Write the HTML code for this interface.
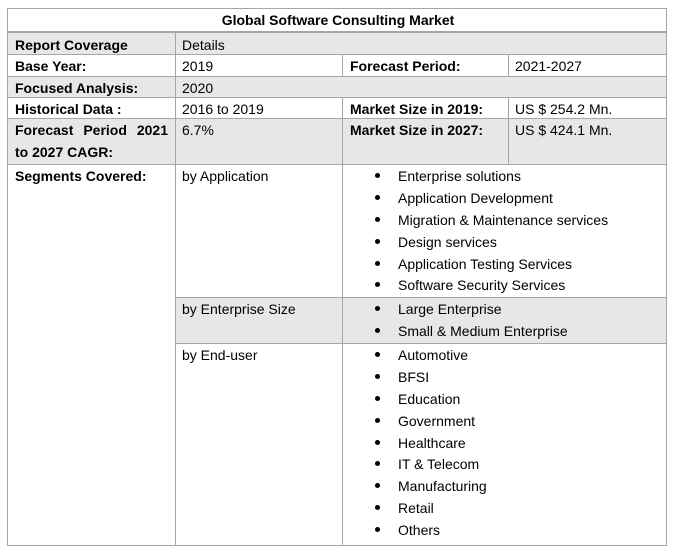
<!DOCTYPE html>
<html><head><style>
body{margin:0;width:676px;height:552px;background:#fff;position:relative;font-family:"Liberation Sans",sans-serif;font-size:14px;color:#000;overflow:hidden}
.b{position:absolute;box-sizing:border-box}
.g{background:#e7e7e7}
.h{position:absolute;background:#a6a6a6;height:1px}
.v{position:absolute;background:#a6a6a6;width:1px}
.t{position:absolute;white-space:nowrap;line-height:22px;margin-top:1px}
.bo{font-weight:bold}
.d{position:absolute;width:5px;height:5px;border-radius:50%;background:#000}
</style></head><body>
<div class="b g" style="left:7px;top:33px;width:659px;height:21px"></div>
<div class="b g" style="left:7px;top:76px;width:659px;height:21px"></div>
<div class="b g" style="left:7px;top:118px;width:659px;height:46px"></div>
<div class="b g" style="left:175px;top:297px;width:491px;height:46px"></div>

<div class="h" style="left:7px;top:8px;width:660px"></div>
<div class="h" style="left:7px;top:31px;width:660px;height:2px"></div>
<div class="h" style="left:7px;top:54px;width:660px"></div>
<div class="h" style="left:7px;top:76px;width:660px"></div>
<div class="h" style="left:7px;top:97px;width:660px"></div>
<div class="h" style="left:7px;top:118px;width:660px"></div>
<div class="h" style="left:7px;top:164px;width:660px"></div>
<div class="h" style="left:175px;top:297px;width:492px"></div>
<div class="h" style="left:175px;top:343px;width:492px"></div>
<div class="h" style="left:7px;top:545px;width:660px"></div>

<div class="v" style="left:7px;top:8px;height:538px"></div>
<div class="v" style="left:666px;top:8px;height:538px"></div>
<div class="v" style="left:175px;top:33px;height:513px"></div>
<div class="v" style="left:342px;top:54px;height:22px"></div>
<div class="v" style="left:508px;top:54px;height:22px"></div>
<div class="v" style="left:342px;top:97px;height:449px"></div>
<div class="v" style="left:508px;top:97px;height:67px"></div>

<div class="t bo" style="left:0;width:676px;text-align:center;top:8px">Global Software Consulting Market</div>
<div class="t bo" style="left:15px;top:33px">Report Coverage</div>
<div class="t" style="left:182px;top:33px">Details</div>
<div class="t bo" style="left:15px;top:54px">Base Year:</div>
<div class="t" style="left:182px;top:54px">2019</div>
<div class="t bo" style="left:350px;top:54px">Forecast Period:</div>
<div class="t" style="left:515px;top:54px">2021-2027</div>
<div class="t bo" style="left:15px;top:76px">Focused Analysis:</div>
<div class="t" style="left:182px;top:76px">2020</div>
<div class="t bo" style="left:15px;top:97px">Historical Data :</div>
<div class="t" style="left:182px;top:97px">2016 to 2019</div>
<div class="t bo" style="left:350px;top:97px">Market Size in 2019:</div>
<div class="t" style="left:515px;top:97px">US $ 254.2 Mn.</div>
<div class="t bo" style="left:15px;top:118px;width:153px;white-space:normal;text-align:justify;text-align-last:justify">Forecast Period 2021</div>
<div class="t bo" style="left:15px;top:140px">to 2027 CAGR:</div>
<div class="t" style="left:182px;top:118px">6.7%</div>
<div class="t bo" style="left:350px;top:118px">Market Size in 2027:</div>
<div class="t" style="left:515px;top:118px">US $ 424.1 Mn.</div>
<div class="t bo" style="left:15px;top:164px">Segments Covered:</div>
<div class="t" style="left:182px;top:164px">by Application</div>
<div class="t" style="left:182px;top:297px">by Enterprise Size</div>
<div class="t" style="left:182px;top:343px">by End-user</div>

<div class="t" style="left:398px;top:164px">Enterprise solutions</div>
<div class="t" style="left:398px;top:186px">Application Development</div>
<div class="t" style="left:398px;top:208px">Migration &amp; Maintenance services</div>
<div class="t" style="left:398px;top:230px">Design services</div>
<div class="t" style="left:398px;top:252px">Application Testing Services</div>
<div class="t" style="left:398px;top:273px">Software Security Services</div>
<div class="t" style="left:398px;top:297px">Large Enterprise</div>
<div class="t" style="left:398px;top:319px">Small &amp; Medium Enterprise</div>
<div class="t" style="left:398px;top:343px">Automotive</div>
<div class="t" style="left:398px;top:365px">BFSI</div>
<div class="t" style="left:398px;top:387px">Education</div>
<div class="t" style="left:398px;top:409px">Government</div>
<div class="t" style="left:398px;top:431px">Healthcare</div>
<div class="t" style="left:398px;top:452px">IT &amp; Telecom</div>
<div class="t" style="left:398px;top:474px">Manufacturing</div>
<div class="t" style="left:398px;top:496px">Retail</div>
<div class="t" style="left:398px;top:518px">Others</div>

<div class="d" style="left:375px;top:173px"></div>
<div class="d" style="left:375px;top:195px"></div>
<div class="d" style="left:375px;top:217px"></div>
<div class="d" style="left:375px;top:239px"></div>
<div class="d" style="left:375px;top:261px"></div>
<div class="d" style="left:375px;top:282px"></div>
<div class="d" style="left:375px;top:306px"></div>
<div class="d" style="left:375px;top:328px"></div>
<div class="d" style="left:375px;top:352px"></div>
<div class="d" style="left:375px;top:374px"></div>
<div class="d" style="left:375px;top:396px"></div>
<div class="d" style="left:375px;top:418px"></div>
<div class="d" style="left:375px;top:440px"></div>
<div class="d" style="left:375px;top:461px"></div>
<div class="d" style="left:375px;top:483px"></div>
<div class="d" style="left:375px;top:505px"></div>
<div class="d" style="left:375px;top:527px"></div>
</body></html>
